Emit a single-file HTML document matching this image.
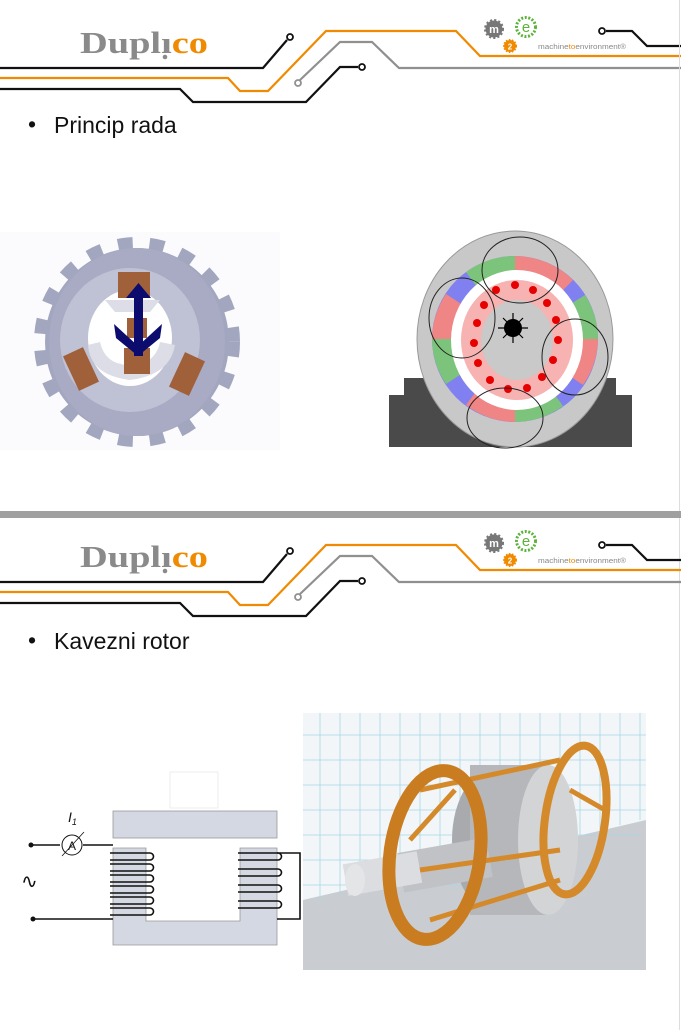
<!DOCTYPE html>
<html><head><meta charset="utf-8"><style>
html,body{margin:0;padding:0;background:#fff;width:681px;height:1030px;overflow:hidden}
svg{display:block}
</style></head><body>
<svg width="681" height="1030" viewBox="0 0 681 1030" xmlns="http://www.w3.org/2000/svg" font-family="Liberation Sans, sans-serif">
<defs>
<g id="hdr">
  <text x="80" y="53" font-family="Liberation Serif, serif" font-weight="bold" font-size="31" fill="#8a8a8a" textLength="128" lengthAdjust="spacingAndGlyphs">Duplı<tspan fill="#f08a00">co</tspan></text>
  <circle cx="165" cy="57" r="2.3" fill="#8a8a8a"/>
  <g fill="none" stroke-width="2.2">
    <path d="M0 68H263L287 40" stroke="#111"/>
    <path d="M0 78H228L240 91H268L326 31H456L480 56H681" stroke="#f08a00"/>
    <path d="M300 80L340 42H372L399 68H681" stroke="#909090"/>
    <path d="M0 89H180L193 102H306L340 67H358" stroke="#111"/>
    <path d="M606 31H632L647 46H681" stroke="#111"/>
  </g>
  <circle cx="290" cy="37" r="3" stroke="#111" stroke-width="1.8" fill="#fff"/>
  <circle cx="298" cy="83" r="3" stroke="#909090" stroke-width="1.8" fill="#fff"/>
  <circle cx="362" cy="67" r="3" stroke="#111" stroke-width="1.8" fill="#fff"/>
  <circle cx="602" cy="31" r="3" stroke="#111" stroke-width="1.8" fill="#fff"/>
  <circle cx="494" cy="29" r="8.5" fill="#777" stroke="#777" stroke-width="3" stroke-dasharray="2 2"/>
  <text x="494" y="33" font-size="11" font-weight="bold" fill="#fff" text-anchor="middle">m</text>
  <circle cx="526" cy="27" r="9.5" fill="#fff" stroke="#5db33a" stroke-width="3" stroke-dasharray="2 1.6"/>
  <text x="526" y="32" font-size="15" fill="#5db33a" text-anchor="middle">e</text>
  <circle cx="510" cy="46" r="6" fill="#f08a00" stroke="#f08a00" stroke-width="2" stroke-dasharray="1.5 1.5"/>
  <text x="510" y="49.5" font-size="8" font-weight="bold" fill="#fff" text-anchor="middle">2</text>
  <text x="538" y="49" font-size="7" fill="#888" textLength="88" lengthAdjust="spacingAndGlyphs">machine<tspan fill="#f08a00">to</tspan>environment®</text>
</g>
</defs>

<use href="#hdr"/>
<line x1="679.5" y1="0" x2="679.5" y2="1030" stroke="#ddd" stroke-width="1"/>
<text x="28" y="132" font-size="23" fill="#111">•</text>
<text x="54" y="133" font-size="23" fill="#111">Princip rada</text>

<!-- gear stator -->
<rect x="0" y="232" width="280" height="218" fill="#fbfbfd"/>
<g>
  <ellipse cx="137" cy="342" rx="92" ry="94" fill="#a3a6bf" stroke="#a3a6bf" stroke-width="22" stroke-dasharray="14 16"/>
  <ellipse cx="137" cy="342" rx="88" ry="94" fill="#a9abc4"/>
  <ellipse cx="130" cy="340" rx="70" ry="72" fill="#bfc1d4"/>
  <ellipse cx="130" cy="338" rx="42" ry="48" fill="#fff"/>
  <path d="M88 345Q90 375 130 380Q170 375 175 345L160 342Q155 365 130 365Q105 365 100 342Z" fill="#dcdde6"/>
  <path d="M105 300H160L150 312H115Z" fill="#dcdde6"/>
  <rect x="118" y="272" width="32" height="26" fill="#a0603a"/>
  <rect x="124" y="348" width="26" height="26" fill="#a0603a"/>
  <rect x="127" y="318" width="20" height="20" fill="#a0603a"/>
  <rect x="70" y="350" width="22" height="38" fill="#a0603a" transform="rotate(-25 81 369)"/>
  <rect x="176" y="355" width="22" height="38" fill="#a0603a" transform="rotate(25 187 374)"/>
  <rect x="134" y="294" width="9" height="62" fill="#0c0c6e"/>
  <path d="M126 298L138.5 283L151 298Z" fill="#0c0c6e"/>
  <path d="M114 324L138 346L162 324L160 338L138 356L116 338Z" fill="#0c0c6e"/>
</g>

<!-- motor diagram -->
<g>
  <path d="M389 395H404V378H616V395H632V447H389Z" fill="#4a4a4a"/>
  <ellipse cx="515" cy="339" rx="98" ry="108" fill="#c8c8c8" stroke="#999" stroke-width="1"/>
  <circle cx="515" cy="339" r="83" fill="#8080f0"/>
  <path d="M515 256A83 83 0 0 1 573 280L515 339Z" fill="#ef8585"/>
  <path d="M515 256A83 83 0 0 0 466 272L515 339Z" fill="#7cc47c"/>
  <path d="M598 339A83 83 0 0 0 585 295L515 339Z" fill="#7cc47c"/>
  <path d="M598 339A83 83 0 0 1 583 385L515 339Z" fill="#ef8585"/>
  <path d="M515 422A83 83 0 0 0 563 406L515 339Z" fill="#7cc47c"/>
  <path d="M515 422A83 83 0 0 1 466 405L515 339Z" fill="#ef8585"/>
  <path d="M432 339A83 83 0 0 1 446 294L515 339Z" fill="#ef8585"/>
  <path d="M432 339A83 83 0 0 0 446 384L515 339Z" fill="#7cc47c"/>
  <ellipse cx="517" cy="340" rx="66" ry="70" fill="#fff"/>
  <ellipse cx="517" cy="340" rx="56" ry="60" fill="#f7b2b2"/>
  <ellipse cx="517" cy="340" rx="36" ry="40" fill="#c9c9c9"/>
  <g fill="#e60000">
    <circle cx="496" cy="290" r="4"/><circle cx="515" cy="285" r="4"/><circle cx="533" cy="290" r="4"/>
    <circle cx="547" cy="303" r="4"/><circle cx="556" cy="320" r="4"/><circle cx="558" cy="340" r="4"/>
    <circle cx="553" cy="360" r="4"/><circle cx="542" cy="377" r="4"/><circle cx="527" cy="388" r="4"/>
    <circle cx="508" cy="389" r="4"/><circle cx="490" cy="380" r="4"/><circle cx="478" cy="363" r="4"/>
    <circle cx="474" cy="343" r="4"/><circle cx="477" cy="323" r="4"/><circle cx="484" cy="305" r="4"/>
  </g>
  <circle cx="513" cy="328" r="9" fill="#000"/>
  <path d="M513 313V343M498 328H528M503 318L523 338M523 318L503 338" stroke="#000" stroke-width="1.2"/>
  <g fill="none" stroke="#222" stroke-width="1">
    <ellipse cx="520" cy="270" rx="38" ry="33"/>
    <ellipse cx="462" cy="318" rx="33" ry="40"/>
    <ellipse cx="575" cy="357" rx="33" ry="38"/>
    <ellipse cx="505" cy="418" rx="38" ry="30"/>
  </g>
</g>

<!-- divider -->
<rect x="0" y="511" width="681" height="7" fill="#a0a0a0"/>

<g transform="translate(0,514)"><use href="#hdr"/></g>
<text x="28" y="648" font-size="23" fill="#111">•</text>
<text x="54" y="649" font-size="23" fill="#111">Kavezni rotor</text>

<!-- transformer -->
<g>
  <rect x="170" y="772" width="48" height="36" fill="#fff" stroke="#eee"/>
  <rect x="113" y="811" width="164" height="27" fill="#d4d8e2" stroke="#999" stroke-width="0.8"/>
  <path d="M113 848H146V921H240V848H277V945H113Z" fill="#d4d8e2" stroke="#999" stroke-width="0.8"/>
  <g fill="none" stroke="#111" stroke-width="1.6">
    <path d="M31 845H60M83 845H113M33 919H113"/>
    <circle cx="72" cy="845" r="10" fill="#fff" stroke-width="1"/>
    <path d="M62 856L84 832" stroke-width="0.8"/>
    <path d="M277 853H300V919H277"/>
    <path d="M110 853h40a3 3 0 0 1 0 7h-40M110 864h40a3 3 0 0 1 0 7h-40M110 875h40a3 3 0 0 1 0 7h-40M110 886h40a3 3 0 0 1 0 7h-40M110 897h40a3 3 0 0 1 0 7h-40M110 908h40a3 3 0 0 1 0 7h-40"/>
    <path d="M238 853h40a3 3 0 0 1 0 7h-40M238 869h40a3 3 0 0 1 0 7h-40M238 885h40a3 3 0 0 1 0 7h-40M238 901h40a3 3 0 0 1 0 7h-40"/>
  </g>
  <circle cx="31" cy="845" r="2.5" fill="#111"/><circle cx="33" cy="919" r="2.5" fill="#111"/>
  <text x="72" y="850" font-size="12" text-anchor="middle" fill="#111">A</text>
  <text x="68" y="822" font-size="14" font-style="italic" fill="#111">I<tspan font-size="9" dy="3">1</tspan></text>
  <text x="21" y="888" font-size="20" fill="#111">∿</text>
</g>

<!-- rotor photo -->
<g>
  <rect x="303" y="713" width="343" height="257" fill="#f2f6f8"/>
  <path d="M303 900L646 820V970H303Z" fill="#c9cdd2"/>
  <g stroke="#a9d6e6" stroke-width="0.8">
    <path d="M320 713V900M340 713V895M360 713V890M380 713V885M400 713V880M420 713V875M440 713V870M460 713V865M480 713V860M500 713V855M520 713V850M540 713V845M560 713V840M580 713V835M600 713V830M620 713V825M640 713V820"/>
    <path d="M303 735H646M303 760H646M303 785H646M303 810H646M303 835H640M303 860H560M303 885H480"/>
  </g>
  <ellipse cx="500" cy="840" rx="48" ry="75" fill="#a8aaad"/>
  <rect x="470" y="765" width="80" height="150" fill="#b5b7ba"/>
  <ellipse cx="548" cy="840" rx="30" ry="75" fill="#d3d4d6"/>
  <rect x="400" y="845" width="90" height="40" fill="#c0c2c5" transform="rotate(-10 445 865)"/>
  <rect x="345" y="858" width="75" height="32" fill="#dcdde0" transform="rotate(-10 380 874)"/>
  <ellipse cx="355" cy="880" rx="10" ry="16" fill="#e4e5e7"/>
  <g fill="none" stroke="#d48a2a" stroke-width="5">
    <path d="M420 790L560 760M420 870L560 850M430 920L560 880M410 840L455 790M570 790L605 810"/>
  </g>
  <ellipse cx="435" cy="855" rx="45" ry="85" fill="none" stroke="#c97c20" stroke-width="13" transform="rotate(8 435 855)"/>
  <ellipse cx="575" cy="820" rx="30" ry="75" fill="none" stroke="#d48a2a" stroke-width="8" transform="rotate(8 575 820)"/>
</g>
</svg>
</body></html>
